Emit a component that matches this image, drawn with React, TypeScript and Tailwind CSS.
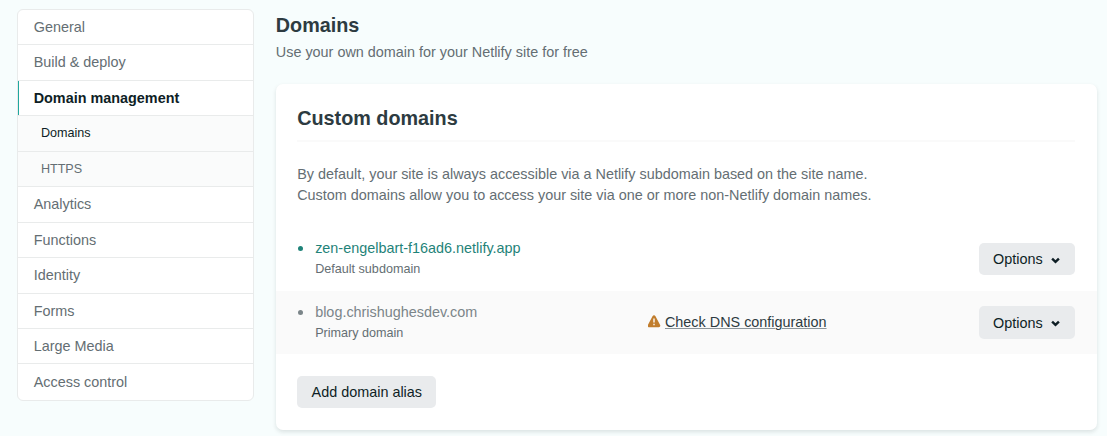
import React from "react";

type NavItem = {
  label: string;
  row: string;
  active?: boolean;
  sub?: boolean;
  current?: boolean;
};

const navItems: NavItem[] = [
  { label: "General", row: "h-[35px] pt-[2px]" },
  { label: "Build & deploy", row: "h-[36px]" },
  { label: "Domain management", row: "h-[35px] pt-[2px]", active: true },
  { label: "Domains", row: "h-[36px]", sub: true, current: true },
  { label: "HTTPS", row: "h-[35px]", sub: true },
  { label: "Analytics", row: "h-[36px]" },
  { label: "Functions", row: "h-[35px] pt-[2px]" },
  { label: "Identity", row: "h-[36px]" },
  { label: "Forms", row: "h-[35px] pt-[2px]" },
  { label: "Large Media", row: "h-[35px] pt-[2px]" },
  { label: "Access control", row: "h-[36px] pt-[2px]" },
];

function navTone(item: NavItem) {
  if (item.active) return "pl-[15.7px] text-[14.4px] font-bold text-[#0e1e25] shadow-[inset_1px_0_0_#20a89e]";
  if (item.sub && item.current) return "bg-[#fafbfb] pl-[22.9px] text-[12.6px] text-[#0e1e25]";
  if (item.sub) return "bg-[#fafbfb] pl-[22.9px] text-[12.6px] text-[#646e73]";
  return "pl-[15.7px] text-[14.4px] text-[#646e73]";
}

function Sidebar() {
  return (
    <nav className="mt-[9px] h-[392px] w-[237px] shrink-0 rounded-[6px] border border-[#e9ebeb] bg-white">
      {navItems.map((item, i) => (
        <a
          key={item.label}
          className={`flex items-center ${item.row} ${navTone(item)} ${
            i < navItems.length - 1 ? "border-b border-b-[#e9ebeb]" : ""
          }`}
        >
          {item.label}
        </a>
      ))}
    </nav>
  );
}

function OptionsButton({ tall }: { tall?: boolean }) {
  return (
    <button
      className={`flex w-24 items-center rounded-[5px] bg-[#e9ebed] pl-[14.3px] text-[14.4px] text-[#0e1e25] ${
        tall ? "h-[33px]" : "h-8"
      }`}
    >
      <span className="pt-[2px]">Options</span>
      <svg className={`ml-[8.4px] ${tall ? "mt-[2px]" : "mt-[3px]"}`} width="9" height="7" viewBox="0 0 9 7" fill="none">
        <path d="M1.1 1.6 4.5 4.9 7.9 1.6" stroke="#0e1e25" strokeWidth="2.4" />
      </svg>
    </button>
  );
}

function WarningIcon() {
  return (
    <svg width="13" height="13" viewBox="0 0 13 13">
      <path
        d="M4.5 1.3C5.3 0 6.7 0 7.5 1.3l4.5 8.4c.7 1.4.1 2.6-1.2 2.6H1.2C-.1 12.3-.7 11.1 0 9.7z"
        fill="#c17d2d"
      />
      <path d="M5.2 3.4h1.6v4.1H5.2zM5.2 8.7h1.6v1.6H5.2z" fill="#f6ece0" />
    </svg>
  );
}

export default function App() {
  return (
    <div className="flex h-[436px] w-[1107px] overflow-hidden bg-[#f7fdfd] pl-[17px] font-['Liberation_Sans',sans-serif] text-[14.4px] text-[#646e73]">
      <Sidebar />
      <main className="ml-[21.8px] w-[821px] pt-3">
        <h1 className="text-[19.8px] leading-[26px] font-bold text-[#2d3b41]">Domains</h1>
        <p className="mt-[3px] leading-[22px]">Use your own domain for your Netlify site for free</p>

        <section className="mt-[21px] h-[346px] rounded-[7px] bg-white shadow-[0_2px_4px_rgba(14,30,37,0.12)]">
          <div className="mx-[21.4px] h-[58px] border-b-2 border-[#fafafa] pt-[21px]">
            <h2 className="text-[19.8px] leading-[26px] font-bold text-[#2d3b41]">Custom domains</h2>
          </div>
          <p className="mx-[21.4px] mt-[22px] h-[42px] leading-[21px]">
            By default, your site is always accessible via a Netlify subdomain based on the site name.
            <br />
            Custom domains allow you to access your site via one or more non-Netlify domain names.
          </p>

          <div className="mt-[21px] flex h-[64px] pr-[22px] pl-[21px]">
            <span className="mt-[19px] ml-[1.2px] h-[5px] w-[5px] shrink-0 rounded-full bg-[#1f8379]" />
            <div className="ml-[12.2px] flex-1 pt-[11px]">
              <a className="block leading-[21px] text-[#1f8379]">zen-engelbart-f16ad6.netlify.app</a>
              <p className="text-[12.6px] leading-[20px]">Default subdomain</p>
            </div>
            <div className="pt-4">
              <OptionsButton />
            </div>
          </div>

          <div className="flex h-[63px] bg-[#fafafa] pr-[22px] pl-[21px]">
            <span className="mt-[19px] ml-[1.2px] h-[5px] w-[5px] shrink-0 rounded-full bg-[#7b8589]" />
            <div className="ml-[12.2px] w-[332.8px] pt-[11px]">
              <a className="block leading-[21px] text-[#7b8589]">blog.chrishughesdev.com</a>
              <p className="text-[12.6px] leading-[20px]">Primary domain</p>
            </div>
            <div className="flex flex-1 items-start pt-[20px]">
              <div className="mt-1">
                <WarningIcon />
              </div>
              <a className="ml-[4px] leading-[22px] text-[#2d3b41] underline decoration-[#8b959a] decoration-1 underline-offset-1">
                Check DNS configuration
              </a>
            </div>
            <div className="pt-[15px]">
              <OptionsButton tall />
            </div>
          </div>

          <button className="mt-[22px] ml-[21px] h-8 w-[139px] rounded-[5px] bg-[#e9ebed] pt-[2px] pl-px text-[#0e1e25]">
            Add domain alias
          </button>
        </section>
      </main>
    </div>
  );
}
